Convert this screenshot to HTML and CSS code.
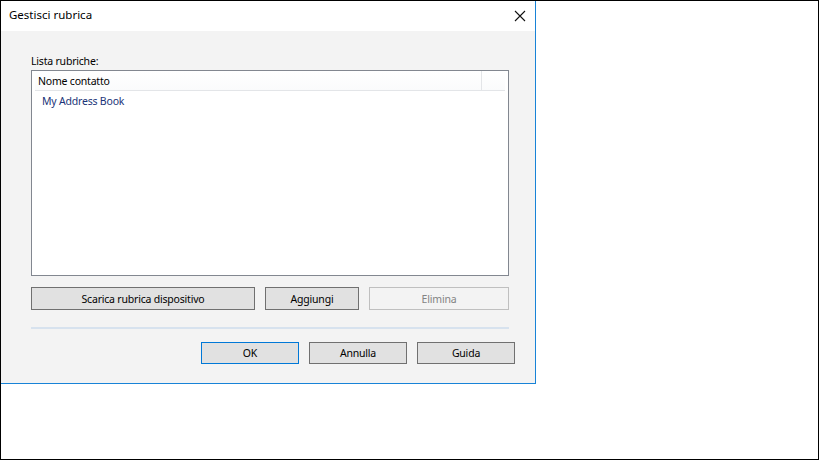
FILE: index.html
```html
<!DOCTYPE html>
<html lang="it">
<head>
<meta charset="utf-8">
<title>Gestisci rubrica</title>
<link rel="stylesheet" href="styles.css">
</head>
<body>
<div class="frame">
  <div class="dialog">
    <div class="titlebar">
      <span class="title">Gestisci rubrica</span>
      <svg class="close" width="12" height="12" viewBox="0 0 12 12" aria-hidden="true">
        <path d="M1 1 L11 11 M11 1 L1 11" stroke="#111" stroke-width="1.1" fill="none"/>
      </svg>
    </div>
    <div class="body">
      <div class="label">Lista rubriche:</div>
      <div class="listbox">
        <div class="header">
          <div class="col col-name">Nome contatto</div>
          <div class="col col-rest"></div>
        </div>
        <div class="item">My Address Book</div>
      </div>
      <div class="row-actions">
        <button class="btn btn-wide">Scarica rubrica dispositivo</button>
        <button class="btn btn-add">Aggiungi</button>
        <button class="btn btn-del" disabled>Elimina</button>
      </div>
      <div class="separator"></div>
      <div class="row-footer">
        <button class="btn btn-foot btn-default">OK</button>
        <button class="btn btn-foot">Annulla</button>
        <button class="btn btn-foot">Guida</button>
      </div>
    </div>
  </div>
</div>
</body>
</html>
```
FILE: styles.css
```css
* { box-sizing: border-box; }
html, body { margin: 0; padding: 0; }
body {
  font-family: "Segoe UI", "Noto Sans", "Liberation Sans", sans-serif;
  font-size: 10.5px;
  letter-spacing: -0.2px;
  color: #000;
  background: #fff;
}
.frame {
  width: 819px;
  height: 460px;
  border: 1px solid #000;
  background: #fff;
  overflow: hidden;
}
.dialog {
  width: 535px;
  height: 383px;
  border-right: 1px solid #1883d7;
  border-bottom: 1px solid #1883d7;
  display: flex;
  flex-direction: column;
  background: #f3f3f3;
}
.titlebar {
  height: 30px;
  background: #fff;
  display: flex;
  align-items: center;
  justify-content: space-between;
  padding: 0 9px 0 8px;
  flex: none;
}
.title { font-size: 11.5px; letter-spacing: 0; line-height: 16px; padding-bottom: 2px; }
.close { display: block; margin-top: -1px; }
.body {
  flex: 1;
  padding: 23px 0 0 30px;
  display: flex;
  flex-direction: column;
}
.label { line-height: 15px; height: 16px; }
.listbox {
  width: 478px;
  height: 206px;
  border: 1px solid #828790;
  background: #fff;
  padding: 0 3px;
  flex: none;
}
.header {
  display: flex;
  height: 20px;
  width: 470px;
  background: linear-gradient(#fff, #fafbfc);
  border-bottom: 1px solid #e3e5e8;
}
.col { line-height: 20px; }
.col-name {
  width: 447px;
  padding-left: 3px;
  border-right: 1px solid #e3e5e8;
}
.col-rest { flex: 1; }
.item {
  padding-left: 7px;
  line-height: 20px;
  color: #1a3478;
}
.row-actions {
  display: flex;
  gap: 10px;
  margin-top: 11px;
  width: 478px;
}
.btn {
  flex: none;
  font-family: inherit;
  font-size: 10.5px;
  letter-spacing: -0.2px;
  height: 23px;
  background: #e1e1e1;
  border: 1px solid #707070;
  color: #000;
  padding: 0;
  margin: 0;
  line-height: 20px;
}
.btn-wide { width: 224px; }
.btn-add { width: 94px; }
.btn-del {
  width: 140px;
  background: #f3f3f3;
  border-color: #bfbfbf;
  color: #838383;
}
.separator {
  width: 478px;
  height: 2px;
  background: #d7e2ee;
  margin-top: 17px;
}
.row-footer {
  display: flex;
  gap: 10px;
  margin-top: 13px;
  padding-left: 170px;
}
.btn-foot { width: 98px; height: 22px; }
.btn-default { border-color: #0078d7; }
```
